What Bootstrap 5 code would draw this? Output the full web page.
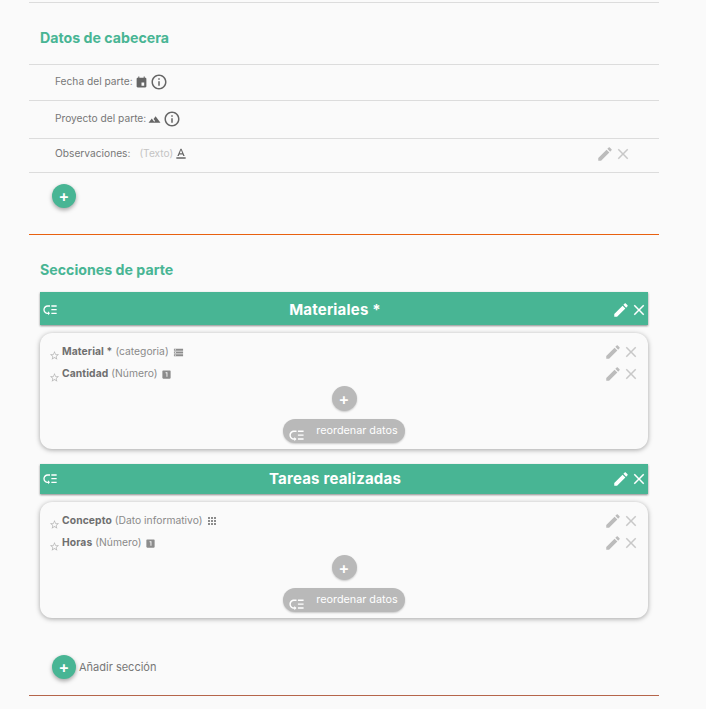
<!DOCTYPE html>
<html lang="es">
<head>
  <meta charset="UTF-8" />
  <meta name="viewport" content="width=device-width, initial-scale=1.0"/>
  <title>Plantilla de parte</title>
  <link href="https://cdn.jsdelivr.net/npm/bootstrap@5.3.2/dist/css/bootstrap.min.css" rel="stylesheet">
  <style>
    body { background-color: #fafafa; font-family: Inter, "Open Sans", sans-serif; color: #777; font-size: 10.5px; }
    .page-wrap { width: 630px; margin-left: 29px; height: 709px; padding-top: 2px; }
    .rule-top { border-top: 1px solid #dcdcdc; height: 62px; padding-left: 11px; padding-top: 26px; }
    .title-green { color: #48b594; font-weight: 700; font-size: 14.2px; line-height: 18px; margin: 0; }
    .field-row { border-top: 1px solid #dcdcdc; padding-left: 26px; padding-right: 27px; color: #777; font-size: 10.2px; }
    .field-a { height: 36px; gap: 2px; padding-bottom: 1px; }
    .field-b { height: 38px; gap: 2px; padding-bottom: 1px; }
    .field-c { height: 35px; border-bottom: 1px solid #dcdcdc; padding-bottom: 4px; }
    .muted-type { color: #c4c4c4; margin-left: 9px; }
    .round-btn { width: 24px; height: 24px; border: 0; padding: 0; border-radius: 50%; background: #48b594; color: #fff; box-shadow: 0 2px 4px rgba(0,0,0,.35); font-size: 16px; line-height: 24px; font-weight: 600; flex: none; }
    .round-grey { background: #b9b9b9; box-shadow: 0 1px 2px rgba(0,0,0,.2); width: 25px; height: 25px; margin: 1px 0 0 0; }
    .add-first { margin: 11px 0 0 23px; height: 50px; }
    .rule-orange { border-top: 1px solid #e8600f; height: 58px; padding: 26px 0 0 11px; margin-top: 0; }
    .section-list { width: 608px; margin-left: 11px; }
    .section-bar { background: #48b594; color: #fff; height: 33px; box-shadow: 0 1px 2px rgba(0,0,0,.45); padding: 3px 0 0 2px; }
    .section-bar-b { height: 30px; padding-top: 0; }
    .bar-title { font-size: 15px; font-weight: 700; letter-spacing: .2px; }
    .data-box { background: #fafafa; height: 116px; border-radius: 12px; box-shadow: 0 1px 5px rgba(0,0,0,.35); margin-top: 8px; margin-bottom: 15px; padding: 8px 8px 0 9px; position: relative; }
    .data-line { height: 22px; font-size: 10.3px; }
    .data-line b { font-weight: 700; color: #6f6f6f; letter-spacing: .1px; margin-right: -1px; }
    .type-name { color: #8a8a8a; }
    .star-ico { margin-top: 6px; margin-right: -2px; }
    .add-col { margin-right: 1px; }
    .pill-btn { width: 122px; height: 24px; background: #b9b9b9; border-radius: 12px; border: 0; color: #fff; font-size: 10.8px; box-shadow: 0 1px 2px rgba(0,0,0,.2); position: relative; padding: 0 0 0 26px; line-height: 20px; margin-top: 8px; }
    .pill-btn svg { position: absolute; left: 5px; bottom: -1px; }
    .add-section { margin: 37px 0 16px 23px; color: #777; font-size: 11px; height: 24px; gap: 3px; }
    .rule-last { border-top: 1px solid #b5654a; }
    .ico { fill: currentColor; flex: none; }
    .ico-tool { color: #bcbcbc; }
    .ico-dim { color: #c8c8c8; }
    .ico-dark { color: #666; }
    .ico-grey { color: #8c8c8c; }
  </style>
</head>
<body>
  <svg class="d-none">
    <symbol id="i-order" viewBox="0 0 24 24"><path d="M14 5h8v2h-8zm0 5.5h8v2h-8zm0 5.5h8v2h-8zM2 11.5C2 15.08 4.92 18 8.5 18H9v2l3-3-3-3v2h-.5C6.02 16 4 13.98 4 11.5S6.02 7 8.5 7H12V5H8.5C4.92 5 2 7.92 2 11.5z"/></symbol>
    <symbol id="i-edit" viewBox="0 0 24 24"><path d="M3 17.25V21h3.75L17.81 9.94l-3.75-3.75L3 17.25zM20.71 7.04c.39-.39.39-1.02 0-1.41l-2.34-2.34c-.39-.39-1.02-.39-1.41 0l-1.83 1.83 3.75 3.75 1.83-1.83z"/></symbol>
    <symbol id="i-close" viewBox="0 0 24 24"><path d="M19 6.41L17.59 5 12 10.59 6.41 5 5 6.41 10.59 12 5 17.59 6.41 19 12 13.41 17.59 19 19 17.59 13.41 12z"/></symbol>
    <symbol id="i-star" viewBox="0 0 24 24"><path d="M22 9.24l-7.19-.62L12 2 9.19 8.63 2 9.24l5.46 4.73L5.82 21 12 17.27 18.18 21l-1.63-7.03L22 9.24zM12 15.4l-3.76 2.27 1-4.28-3.32-2.88 4.38-.38L12 6.1l1.71 4.04 4.38.38-3.32 2.88 1 4.28L12 15.4z"/></symbol>
    <symbol id="i-event" viewBox="0 0 24 24"><path fill-rule="evenodd" d="M19 3h-1V1h-2v2H8V1H6v2H5c-1.1 0-2 .9-2 2v14c0 1.1.9 2 2 2h14c1.1 0 2-.9 2-2V5c0-1.1-.9-2-2-2zm-2 9h-5v6h5z"/></symbol>
    <symbol id="i-terrain" viewBox="0 0 24 24"><path d="M14 6l-3.75 5 2.85 3.8-1.6 1.2C9.81 13.75 7 10 7 10l-6 8h22L14 6z"/></symbol>
    <symbol id="i-info" viewBox="0 0 24 24"><path d="M11 7h2v2h-2zm0 4h2v6h-2zm1-9C6.48 2 2 6.48 2 12s4.48 10 10 10 10-4.48 10-10S17.52 2 12 2zm0 18c-4.41 0-8-3.59-8-8s3.59-8 8-8 8 3.59 8 8-3.59 8-8 8z"/></symbol>
    <symbol id="i-text" viewBox="0 0 24 24"><path d="M5 17v2h14v-2H5zm4.5-4.2h5l.9 2.2h2.1L12.75 4h-1.5L6.5 15h2.1l.9-2.2zM12 5.98L13.87 11h-3.74L12 5.98z"/></symbol>
    <symbol id="i-storage" viewBox="0 0 24 24"><path d="M2 20h20v-4H2v4zm2-3h2v2H4v-2zM2 4v4h20V4H2zm4 3H4V5h2v2zm-4 7h20v-4H2v4zm2-3h2v2H4v-2z"/></symbol>
    <symbol id="i-apps" viewBox="0 0 24 24"><path d="M4 8h4V4H4v4zm6 12h4v-4h-4v4zm-6 0h4v-4H4v4zm0-6h4v-4H4v4zm6 0h4v-4h-4v4zm6-10v4h4V4h-4zm-6 4h4V4h-4v4zm6 6h4v-4h-4v4zm0 6h4v-4h-4v4z"/></symbol>
    <symbol id="i-one" viewBox="0 0 24 24"><path d="M19 3H5c-1.1 0-2 .9-2 2v14c0 1.1.9 2 2 2h14c1.1 0 2-.9 2-2V5c0-1.1-.9-2-2-2zm-5 14h-2V9h-2V7h4v10z"/></symbol>
  </svg>

  <div class="page-wrap">
    <div class="rule-top"><h2 class="title-green">Datos de cabecera</h2></div>

    <div class="field-row field-a d-flex align-items-center">
      <span>Fecha del parte:</span>
      <svg class="ico ico-dark" width="13" height="13"><use href="#i-event"/></svg>
      <svg class="ico ico-dark" width="18" height="18"><use href="#i-info"/></svg>
    </div>
    <div class="field-row field-b d-flex align-items-center">
      <span>Proyecto del parte:</span>
      <svg class="ico ico-dark" width="13" height="13"><use href="#i-terrain"/></svg>
      <svg class="ico ico-dark" width="18" height="18"><use href="#i-info"/></svg>
    </div>
    <div class="field-row field-c d-flex align-items-center">
      <span>Observaciones:</span>
      <span class="muted-type">(Texto)</span>
      <svg class="ico ico-dark" width="16" height="16"><use href="#i-text"/></svg>
      <div class="ms-auto d-flex align-items-center">
        <svg class="ico ico-tool" width="18" height="18"><use href="#i-edit"/></svg>
        <svg class="ico ico-dim" width="18" height="18"><use href="#i-close"/></svg>
      </div>
    </div>

    <div class="add-first"><button class="round-btn" type="button">+</button></div>

    <div class="rule-orange"><h2 class="title-green">Secciones de parte</h2></div>

    <div class="section-list">
      <div class="section-bar d-flex align-items-center">
        <svg class="ico" width="16" height="16"><use href="#i-order"/></svg>
        <span class="bar-title flex-grow-1 text-center">Materiales *</span>
        <div class="d-flex align-items-center">
          <svg class="ico" width="18" height="18"><use href="#i-edit"/></svg>
          <svg class="ico" width="18" height="18"><use href="#i-close"/></svg>
        </div>
      </div>
      <div class="data-box d-flex flex-column">
        <div class="data-line d-flex align-items-center gap-1">
          <svg class="ico ico-tool star-ico" width="11" height="11"><use href="#i-star"/></svg>
          <b>Material *</b> <span class="type-name">(categoria)</span>
          <svg class="ico ico-grey" width="11" height="11"><use href="#i-storage"/></svg>
          <div class="ms-auto d-flex align-items-center">
            <svg class="ico ico-tool" width="18" height="18"><use href="#i-edit"/></svg>
            <svg class="ico ico-dim" width="18" height="18"><use href="#i-close"/></svg>
          </div>
        </div>
        <div class="data-line d-flex align-items-center gap-1">
          <svg class="ico ico-tool star-ico" width="11" height="11"><use href="#i-star"/></svg>
          <b>Cantidad</b> <span class="type-name">(Número)</span>
          <svg class="ico ico-grey" width="11" height="11"><use href="#i-one"/></svg>
          <div class="ms-auto d-flex align-items-center">
            <svg class="ico ico-tool" width="18" height="18"><use href="#i-edit"/></svg>
            <svg class="ico ico-dim" width="18" height="18"><use href="#i-close"/></svg>
          </div>
        </div>
        <div class="add-col d-flex flex-column align-items-center">
          <button class="round-btn round-grey" type="button">+</button>
          <button class="pill-btn" type="button"><svg class="ico" width="17" height="17"><use href="#i-order"/></svg>reordenar datos</button>
        </div>
      </div>

      <div class="section-bar section-bar-b d-flex align-items-center">
        <svg class="ico" width="16" height="16"><use href="#i-order"/></svg>
        <span class="bar-title flex-grow-1 text-center">Tareas realizadas</span>
        <div class="d-flex align-items-center">
          <svg class="ico" width="18" height="18"><use href="#i-edit"/></svg>
          <svg class="ico" width="18" height="18"><use href="#i-close"/></svg>
        </div>
      </div>
      <div class="data-box d-flex flex-column">
        <div class="data-line d-flex align-items-center gap-1">
          <svg class="ico ico-tool star-ico" width="11" height="11"><use href="#i-star"/></svg>
          <b>Concepto</b> <span class="type-name">(Dato informativo)</span>
          <svg class="ico ico-grey" width="12" height="12"><use href="#i-apps"/></svg>
          <div class="ms-auto d-flex align-items-center">
            <svg class="ico ico-tool" width="18" height="18"><use href="#i-edit"/></svg>
            <svg class="ico ico-dim" width="18" height="18"><use href="#i-close"/></svg>
          </div>
        </div>
        <div class="data-line d-flex align-items-center gap-1">
          <svg class="ico ico-tool star-ico" width="11" height="11"><use href="#i-star"/></svg>
          <b>Horas</b> <span class="type-name">(Número)</span>
          <svg class="ico ico-grey" width="11" height="11"><use href="#i-one"/></svg>
          <div class="ms-auto d-flex align-items-center">
            <svg class="ico ico-tool" width="18" height="18"><use href="#i-edit"/></svg>
            <svg class="ico ico-dim" width="18" height="18"><use href="#i-close"/></svg>
          </div>
        </div>
        <div class="add-col d-flex flex-column align-items-center">
          <button class="round-btn round-grey" type="button">+</button>
          <button class="pill-btn" type="button"><svg class="ico" width="17" height="17"><use href="#i-order"/></svg>reordenar datos</button>
        </div>
      </div>
    </div>

    <div class="add-section d-flex align-items-center">
      <button class="round-btn" type="button">+</button>
      <span>Añadir sección</span>
    </div>
    <div class="rule-last"></div>
  </div>

  <script src="https://cdn.jsdelivr.net/npm/bootstrap@5.3.2/dist/js/bootstrap.bundle.min.js"></script>
</body>
</html>
